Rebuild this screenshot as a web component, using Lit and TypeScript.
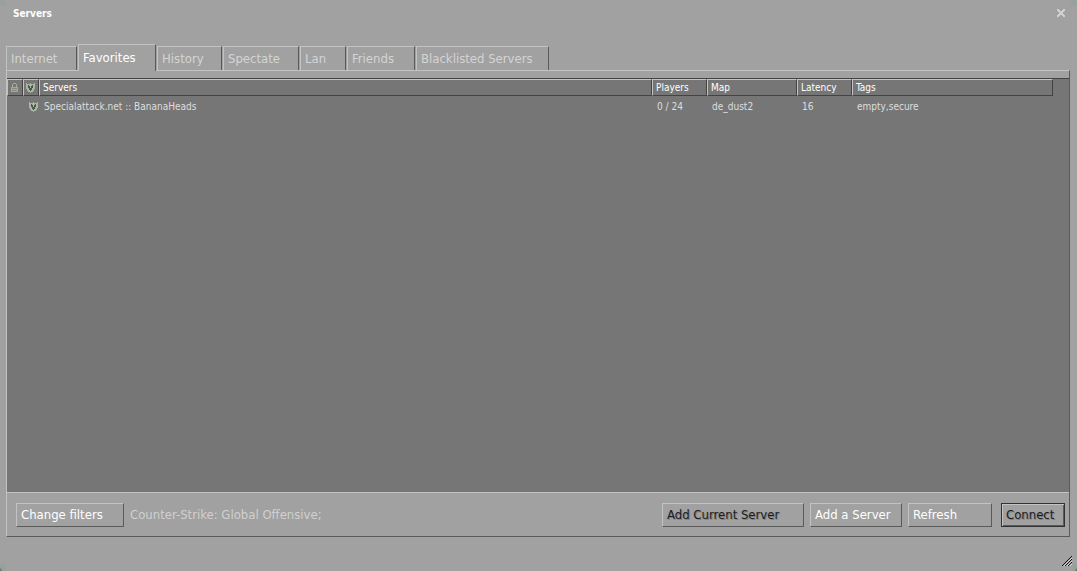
import { LitElement, html, css, svg } from "lit";
import { customElement, state } from "lit/decorators.js";
import { classMap } from "lit/directives/class-map.js";

interface Server {
  name: string;
  players: string;
  map: string;
  latency: number;
  tags: string;
}

const TABS = [
  { id: "internet", label: "Internet" },
  { id: "favorites", label: "Favorites" },
  { id: "history", label: "History" },
  { id: "spectate", label: "Spectate" },
  { id: "lan", label: "Lan" },
  { id: "friends", label: "Friends" },
  { id: "blacklist", label: "Blacklisted Servers" },
];

const FAVORITES: Server[] = [
  {
    name: "Specialattack.net :: BananaHeads",
    players: "0 / 24",
    map: "de_dust2",
    latency: 16,
    tags: "empty,secure",
  },
];

const lockIcon = html`<svg class="icon" width="7" height="9" viewBox="0 0 7 9" shape-rendering="crispEdges" role="img" aria-label="Password">
  ${svg`<path d="M2 0h3v1h-3zM1 1h1v3h-1zM5 1h1v3h-1zM0 4h7v1h-7zM0 6h7v1h-7zM0 8h7v1h-7zM0 5h1v3h-1zM6 5h1v3h-1z" fill="#a3ac98"/>
  <path d="M1 5h5v1h-5zM1 7h5v1h-5z" fill="#848a7c"/>`}
</svg>`;

const shieldIcon = html`<svg class="icon" width="9" height="10" viewBox="0 0 9 10" shape-rendering="crispEdges" role="img" aria-label="Secure">
  ${svg`<path d="M0 0h1v1h3v-1h1v1h3v-1h1v6h-1v2h-1v1h-2v1h-1v-1h-2v-1h-1v-2h-1z" fill="#a8b5a2"/>
  <path d="M2 2h1v1h1v2h1v-2h1v-1h1v3h-1v2h-1v1h-1v-1h-1v-2h-1z" fill="#4c5a49"/>`}
</svg>`;

@customElement("app-root")
export class AppRoot extends LitElement {
  @state() private active = "favorites";

  static styles = css`
    :host {
      --face: #a1a1a1;
      --corner: #98a19a;
      --light: #c3c3c3;
      --dark: #5a5a5a;
      --line: #434343;
      --list: #767676;
      display: block;
      font-family: "DejaVu Sans Condensed", "DejaVu Sans", sans-serif;
      font-size: 13px;
      color: #fff;
    }
    .window {
      box-sizing: border-box;
      display: flex;
      flex-direction: column;
      min-height: 100vh;
      padding: 0 7px 0 6px;
      background:
        linear-gradient(var(--corner), var(--corner)) top left / 6px 6px no-repeat,
        linear-gradient(var(--corner), var(--corner)) top right / 6px 6px no-repeat,
        linear-gradient(to top right, #5f6666, var(--corner) 30%) bottom left / 6px 8px no-repeat,
        linear-gradient(to top left, #5f6666, var(--corner) 30%) bottom right / 6px 8px no-repeat,
        var(--face);
    }
    button {
      box-sizing: border-box;
      margin: 0;
      font: inherit;
      color: inherit;
      background: none;
      border: 0;
      text-align: left;
      white-space: nowrap;
    }
    .title-bar {
      display: flex;
      justify-content: space-between;
      align-items: center;
      height: 28px;
      padding: 0 5px 0 7px;
      margin-bottom: 16px;
    }
    h1 {
      margin: 0;
      font-size: 10px;
      font-weight: bold;
      line-height: 16px;
    }
    .close {
      display: flex;
      padding: 0 0 2px;
    }
    .tabs {
      display: flex;
      align-items: flex-end;
      gap: 1px;
      height: 26px;
    }
    .tab {
      height: 24px;
      padding: 0 4px;
      border: 1px solid var(--light);
      border-right-color: var(--dark);
      border-bottom: 0;
      color: #d4d4d4;
    }
    .tab.active {
      position: relative;
      height: 27px;
      margin-bottom: -1px;
      padding-bottom: 2px;
      background: var(--face);
      color: #fff;
    }
    .internet { width: 71px; }
    .favorites { width: 78px; }
    .history { width: 65px; }
    .spectate { width: 76px; }
    .lan { width: 46px; }
    .friends { width: 68px; }
    .blacklist { width: 133px; }
    .panel {
      flex: 1;
      display: flex;
      flex-direction: column;
      border: 1px solid var(--light);
      border-right-color: var(--dark);
      border-bottom-color: var(--dark);
    }
    .list {
      flex: 1;
      margin-top: 7px;
      padding-right: 16px;
      border-top: 1px solid var(--line);
      background: var(--list);
    }
    table {
      width: 100%;
      table-layout: fixed;
      border-collapse: separate;
      border-spacing: 0;
      font-size: 10px;
      line-height: 14px;
    }
    th {
      box-sizing: border-box;
      height: 17px;
      padding: 0 3px;
      border: 1px solid var(--light);
      border-right-color: var(--line);
      border-bottom-color: var(--line);
      font-weight: normal;
      text-align: left;
      white-space: nowrap;
    }
    td {
      height: 22px;
      padding: 0 5px;
      color: #dedede;
      white-space: nowrap;
    }
    .mark { width: 16px; }
    .secure { padding: 0 2px; }
    .flag { padding: 0 0 0 6px; }
    .players, .latency { width: 55px; }
    .map { width: 90px; }
    .tags { width: 201px; }
    .icon { display: block; }
    .footer {
      display: flex;
      align-items: center;
      gap: 6px;
      height: 43px;
      padding: 0 4px 0 9px;
      border-top: 1px solid var(--light);
    }
    .summary {
      flex: 1;
      color: #d0d0d0;
      line-height: 20px;
    }
    .action {
      height: 24px;
      padding: 0 4px;
      border: 1px solid var(--light);
      border-right-color: var(--dark);
      border-bottom-color: var(--dark);
    }
    .filters { width: 108px; }
    .current { width: 142px; }
    .add { width: 92px; }
    .refresh { width: 84px; }
    .connect {
      width: 64px;
      margin-left: 3px;
      border-color: #333;
      box-shadow: inset 1px 1px var(--light), inset -1px -1px var(--dark);
    }
    .strong {
      color: #1c1c1c;
      text-shadow: 1px 1px #808080;
    }
    .status {
      display: flex;
      justify-content: flex-end;
      align-items: flex-end;
      height: 34px;
    }
    .grip {
      margin: 0 -2px 5px 0;
    }
  `;

  render() {
    const rows = this.active === "favorites" ? FAVORITES : [];
    return html`
      <main class="window">
        <header class="title-bar">
          <h1>Servers</h1>
          <button class="close" aria-label="Close">
            <svg width="8" height="8" viewBox="0 0 8 8" shape-rendering="crispEdges" aria-hidden="true">
              <path d="M0 0h2v1h1v1h2v-1h1v-1h2v2h-1v1h-1v2h1v1h1v2h-2v-1h-1v-1h-2v1h-1v1h-2v-2h1v-1h1v-2h-1v-1h-1z" fill="#d0d0d0" />
            </svg>
          </button>
        </header>
        <div class="tabs" role="tablist">
          ${TABS.map(
            (tab) => html`<button
              class=${classMap({ tab: true, [tab.id]: true, active: tab.id === this.active })}
              role="tab"
              aria-selected=${tab.id === this.active ? "true" : "false"}
              @click=${() => (this.active = tab.id)}
            >${tab.label}</button>`
          )}
        </div>
        <section class="panel" role="tabpanel">
          <div class="list">
            <table>
              <thead>
                <tr>
                  <th class="mark">${lockIcon}</th>
                  <th class="mark secure">${shieldIcon}</th>
                  <th>Servers</th>
                  <th class="players">Players</th>
                  <th class="map">Map</th>
                  <th class="latency">Latency</th>
                  <th class="tags">Tags</th>
                </tr>
              </thead>
              <tbody>
                ${rows.map(
                  (row) => html`<tr>
                    <td></td>
                    <td class="flag">${shieldIcon}</td>
                    <td>${row.name}</td>
                    <td>${row.players}</td>
                    <td>${row.map}</td>
                    <td>${row.latency}</td>
                    <td>${row.tags}</td>
                  </tr>`
                )}
              </tbody>
            </table>
          </div>
          <footer class="footer">
            <button class="action filters">Change filters</button>
            <span class="summary">Counter-Strike: Global Offensive;</span>
            <button class="action current strong">Add Current Server</button>
            <button class="action add">Add a Server</button>
            <button class="action refresh">Refresh</button>
            <button class="action connect strong">Connect</button>
          </footer>
        </section>
        <div class="status">
          <svg class="grip" width="10" height="10" viewBox="0 0 10 10" shape-rendering="crispEdges" aria-hidden="true">
            <path d="M2 10L10 2M5 10L10 5M8 10L10 8" stroke="#d6d6d6" />
            <path d="M0 10L10 0M3 10L10 3M6 10L10 6" stroke="#111" />
          </svg>
        </div>
      </main>
    `;
  }
}
